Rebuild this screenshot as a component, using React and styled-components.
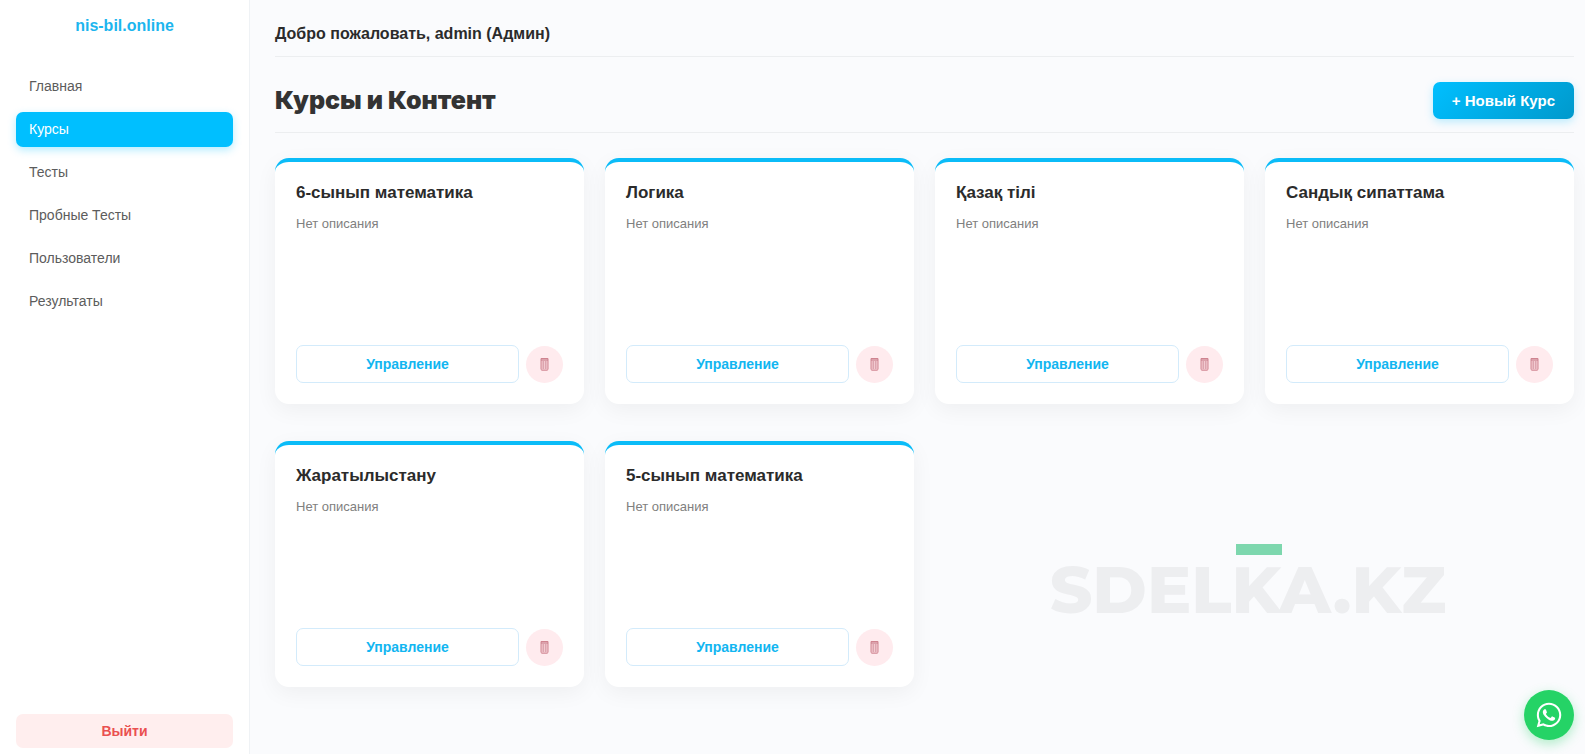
import { useState } from "react";
import styled, { createGlobalStyle } from "styled-components";
import { FaWhatsapp } from "react-icons/fa";

const GlobalStyle = createGlobalStyle`
  * {
    box-sizing: border-box;
  }

  body {
    margin: 0;
    background: #fafbfd;
    color: #2b2b2b;
    font-family: "Liberation Sans", Arial, sans-serif;
  }

  button {
    font-family: inherit;
    cursor: pointer;
  }
`;

const Layout = styled.div`
  display: flex;
  min-height: 100vh;
`;

const Sidebar = styled.aside`
  display: flex;
  flex-direction: column;
  flex: 0 0 250px;
  height: 100vh;
  position: sticky;
  top: 0;
  padding: 16px 16px 6px;
  background: #fff;
  border-right: 1px solid #eff2f5;
`;

const Logo = styled.a`
  margin-bottom: 33px;
  color: #1cb5ee;
  font-size: 16px;
  font-weight: 700;
  line-height: 20px;
  text-align: center;
  text-decoration: none;
`;

const Nav = styled.nav`
  display: flex;
  flex-direction: column;
  flex: 1;
  gap: 8px;
`;

const NavLink = styled.a`
  padding: 0 13px;
  border-radius: 7px;
  background: ${({ $active }) => ($active ? "#00bfff" : "transparent")};
  box-shadow: ${({ $active }) =>
    $active ? "0 3px 9px rgba(0, 191, 255, 0.3)" : "none"};
  color: ${({ $active }) => ($active ? "#fff" : "#5c5c5c")};
  font-size: 14px;
  line-height: 35px;
  text-decoration: none;
`;

const LogoutButton = styled.button`
  height: 34px;
  border: none;
  border-radius: 7px;
  background: #ffeeee;
  color: #ea5050;
  font-size: 14px;
  font-weight: 700;
`;

const Main = styled.main`
  flex: 1;
  min-width: 0;
  padding: 25px 11px 25px 25px;
`;

const Welcome = styled.header`
  padding-bottom: 13px;
  border-bottom: 1px solid #eceef0;
  font-size: 16px;
  font-weight: 700;
  line-height: 18px;
`;

const PageHeader = styled.div`
  display: flex;
  align-items: center;
  justify-content: space-between;
  margin-bottom: 25px;
  padding: 25px 0 13px;
  border-bottom: 1px solid #eceef0;
`;

const PageTitle = styled.h1`
  margin: 0;
  color: #333;
  font-family: "Arial Black", Inter, sans-serif;
  font-size: 25px;
  font-weight: 900;
  line-height: 37px;
`;

const AddButton = styled.button`
  height: 37px;
  padding: 0 19px;
  border: none;
  border-radius: 7px;
  background: linear-gradient(135deg, #00bfff, #0099cc);
  box-shadow: 0 3px 9px rgba(0, 191, 255, 0.25);
  color: #fff;
  font-size: 15px;
  font-weight: 700;
`;

const CourseGrid = styled.div`
  display: grid;
  grid-template-columns: repeat(auto-fill, minmax(280px, 1fr));
  gap: 37px 21px;
`;

const Card = styled.article`
  display: flex;
  flex-direction: column;
  min-height: 246px;
  padding: 21px;
  border-top: 4px solid #0bbcf8;
  border-radius: 14px;
  background: #fff;
  box-shadow: 0 6px 22px rgba(0, 0, 0, 0.05);
`;

const CardTitle = styled.h2`
  margin: 0 0 13px;
  font-size: 17px;
  font-weight: 700;
  line-height: 20px;
`;

const CardText = styled.p`
  flex: 1;
  margin: 0;
  color: #808080;
  font-size: 13px;
  line-height: 16px;
`;

const CardActions = styled.div`
  display: flex;
  align-items: center;
  gap: 7px;
`;

const ManageButton = styled.button`
  flex: 1;
  height: 38px;
  border: 1px solid #d3ebfb;
  border-radius: 7px;
  background: #fff;
  color: #12b6f1;
  font-size: 14px;
  font-weight: 700;
`;

const DeleteButton = styled.button`
  display: flex;
  align-items: center;
  justify-content: center;
  width: 37px;
  height: 37px;
  padding: 0;
  border: none;
  border-radius: 50%;
  background: #ffebee;
`;

const Watermark = styled.div`
  position: fixed;
  right: 139px;
  bottom: 126px;
  color: #edeef0;
  font-family: Montserrat, Inter, sans-serif;
  font-size: 66px;
  font-weight: 800;
  line-height: 76px;
  pointer-events: none;

  &::before {
    content: "";
    position: absolute;
    top: -8px;
    left: 47%;
    width: 46px;
    height: 11px;
    background: #7dd7ae;
  }
`;

const WhatsAppLink = styled.a`
  display: flex;
  align-items: center;
  justify-content: center;
  position: fixed;
  right: 11px;
  bottom: 14px;
  width: 50px;
  height: 50px;
  border-radius: 50%;
  background: #25d366;
  box-shadow: 0 4px 12px rgba(37, 211, 102, 0.35);
  color: #fff;
`;

const TrashIcon = () => (
  <svg width="9" height="14" viewBox="0 0 9 14" fill="none" aria-hidden="true">
    <path d="M1 1.5h7v11l-.8.7H1.8L1 12.5z" fill="#f3cbd1" stroke="#cf8490" />
    <path d="M1 3h7" stroke="#c47886" />
    <path d="M3.2 4v8M5.8 4v8" stroke="#c98793" strokeWidth="0.8" />
  </svg>
);

const navItems = [
  "Главная",
  "Курсы",
  "Тесты",
  "Пробные Тесты",
  "Пользователи",
  "Результаты",
];

const initialCourses = [
  { id: 1, title: "6-сынып математика" },
  { id: 2, title: "Логика" },
  { id: 3, title: "Қазақ тілі" },
  { id: 4, title: "Сандық сипаттама" },
  { id: 5, title: "Жаратылыстану" },
  { id: 6, title: "5-сынып математика" },
];

const CourseCard = ({ course, deleteCourse }) => (
  <Card>
    <CardTitle>{course.title}</CardTitle>
    <CardText>{course.description || "Нет описания"}</CardText>
    <CardActions>
      <ManageButton type="button">Управление</ManageButton>
      <DeleteButton
        type="button"
        aria-label="Удалить"
        onClick={() => deleteCourse(course.id)}
      >
        <TrashIcon />
      </DeleteButton>
    </CardActions>
  </Card>
);

const App = () => {
  const [activeItem, setActiveItem] = useState("Курсы");
  const [courses, setCourses] = useState(initialCourses);

  const handleNavClick = (event, item) => {
    event.preventDefault();
    setActiveItem(item);
  };

  const deleteCourse = (id) => {
    setCourses(courses.filter((course) => course.id !== id));
  };

  return (
    <>
      <GlobalStyle />
      <Layout>
        <Sidebar>
          <Logo href="#">nis-bil.online</Logo>
          <Nav>
            {navItems.map((item) => (
              <NavLink
                key={item}
                href="#"
                $active={item === activeItem}
                onClick={(event) => handleNavClick(event, item)}
              >
                {item}
              </NavLink>
            ))}
          </Nav>
          <LogoutButton type="button">Выйти</LogoutButton>
        </Sidebar>

        <Main>
          <Welcome>Добро пожаловать, admin (Админ)</Welcome>
          <PageHeader>
            <PageTitle>Курсы и Контент</PageTitle>
            <AddButton type="button">+ Новый Курс</AddButton>
          </PageHeader>
          <CourseGrid>
            {courses.map((course) => (
              <CourseCard
                key={course.id}
                course={course}
                deleteCourse={deleteCourse}
              />
            ))}
          </CourseGrid>
        </Main>
      </Layout>

      <Watermark>SDELKA.KZ</Watermark>
      <WhatsAppLink href="#" aria-label="WhatsApp">
        <FaWhatsapp size={28} />
      </WhatsAppLink>
    </>
  );
};

export default App;
